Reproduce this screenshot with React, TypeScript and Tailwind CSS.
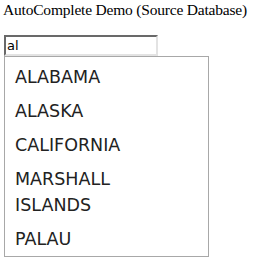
const STATES = ["ALABAMA", "ALASKA", "CALIFORNIA", "MARSHALL ISLANDS", "PALAU"];

export default function App() {
    return (
        <div className="w-[255px] h-[258px] bg-white overflow-hidden">
            <div className="pl-[3px] pt-[1px] whitespace-nowrap text-[15.5px] tracking-[-0.2px] leading-[18px] text-black font-['Liberation_Serif',serif]">
                AutoComplete Demo (Source Database)
            </div>
            <div className="ml-[4px] mt-[16px]">
                <input
                    defaultValue="al"
                    className="block w-[154px] h-[21px] px-[1px] border-2 border-t-[#696969] border-l-[#696969] border-b-[#e3e3e3] border-r-[#e3e3e3] bg-white text-[13px] text-black outline-none font-['DejaVu_Sans',sans-serif]"
                />
                <ul className="w-[205px] border border-[#a8a8a8] bg-white pt-[3px] font-['DejaVu_Sans',sans-serif] text-[17.5px] leading-[26px] text-[#222]">
                    {STATES.map(s => (
                        <li key={s} className="pl-[10px] pr-[30px] py-[4px]">{s}</li>
                    ))}
                </ul>
            </div>
        </div>
    );
}
